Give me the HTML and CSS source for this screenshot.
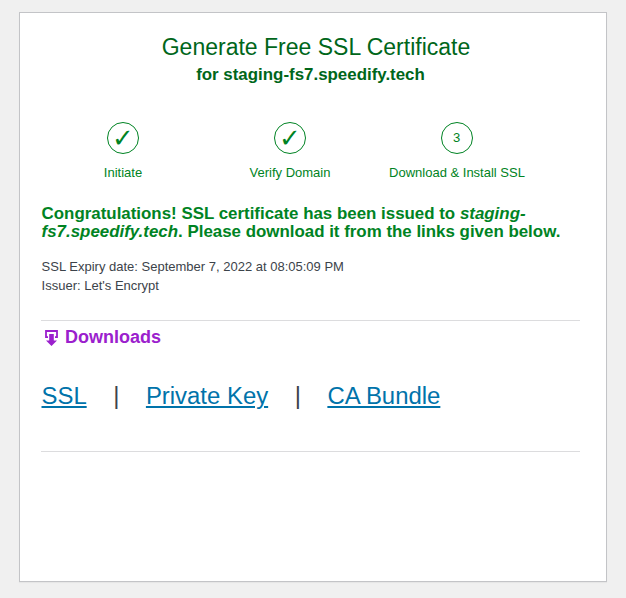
FILE: index.html
```html
<!DOCTYPE html>
<html lang="en"><head><meta charset="utf-8"><title>Generate Free SSL Certificate</title><link rel="stylesheet" href="styles.css"></head>
<body>
<main class="card">
<h1>Generate Free SSL Certificate</h1>
<h2>for staging-fs7.speedify.tech</h2>
<ol class="steps">
<li><span class="circle check">✓</span><span>Initiate</span></li>
<li><span class="circle check">✓</span><span>Verify Domain</span></li>
<li><span class="circle number">3</span><span>Download &amp; Install SSL</span></li>
</ol>
<p class="success">Congratulations! SSL certificate has been issued to <em>staging-fs7.speedify.tech</em>. Please download it from the links given below.</p>
<p class="details">SSL Expiry date: September 7, 2022 at 08:05:09 PM<br>Issuer: Let's Encrypt</p>
<section class="downloads">
<h3><svg width="13" height="16" viewBox="0 0 13 16"><path d="M3 7.2H1V1h11v6.2h-2" fill="none" stroke="currentColor" stroke-width="1.8"/><path d="M4.2 4h4.6v6.5H12L6.5 16 1 10.5h3.2z" fill="currentColor"/></svg>Downloads</h3>
<nav class="links"><a href="#">SSL</a><span>|</span><a href="#">Private Key</a><span>|</span><a href="#">CA Bundle</a></nav>
</section>
</main>
</body></html>
```
FILE: styles.css
```css
* { box-sizing: border-box; }
body { margin: 0; padding: 12px 19px; background: #f0f0f0; font: 13px/19px "Liberation Sans", Arial, sans-serif; color: #3c434a; }
.card { width: 588px; height: 570px; padding: 19px 26px 0 21px; background: #fff; border: 1px solid #c3c4c7; box-shadow: 0 1px 1px rgba(0, 0, 0, .04); }
h1, h2, h3, p, ol { margin: 0; padding: 0; }
h1 { font-size: 23px; font-weight: 400; line-height: 30px; text-align: center; color: #00661a; padding-left: 11px; }
h2 { margin-top: 2px; font-size: 16.9px; line-height: 22px; text-align: center; color: #00661a; }
.steps { display: grid; grid-template-columns: repeat(3, 167px); margin: 36px 0 0 -1.5px; list-style: none; color: #008323; }
.steps li { display: flex; flex-direction: column; align-items: center; gap: 9px; white-space: nowrap; }
.circle { width: 32px; height: 32px; border: 1px solid #008323; border-radius: 50%; display: flex; align-items: center; justify-content: center; }
.check { font: 26px/30px "DejaVu Sans", sans-serif; }
.number { padding: 0 1px 1px 0; }
.success { margin-top: 23px; padding-left: .6px; font-size: 16.9px; line-height: 18px; font-weight: 700; color: #008323; }
.details { margin-top: 16px; padding-left: .6px; }
.downloads { margin-top: 25px; height: 132px; border-top: 1px solid #dcdcde; border-bottom: 1px solid #dcdcde; }
h3 { display: flex; align-items: center; gap: 7px; padding: 5px 0 0 4px; font-size: 18px; line-height: 22px; color: #9b20cd; }
h3 svg { position: relative; top: 1px; }
.links { display: flex; gap: 26.5px; margin-top: 32px; padding-left: .5px; font-size: 23.92px; line-height: 32px; }
.links a { color: #0073aa; }
```
